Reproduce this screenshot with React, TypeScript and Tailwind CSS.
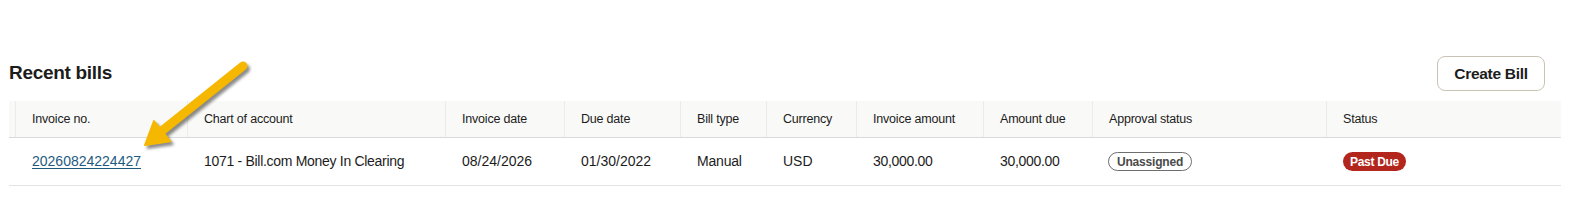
import React from "react";

const headers = [
  "",
  "Invoice no.",
  "Chart of account",
  "Invoice date",
  "Due date",
  "Bill type",
  "Currency",
  "Invoice amount",
  "Amount due",
  "Approval status",
  "Status",
];

const gridCols =
  "grid grid-cols-[7px_172px_258px_119px_116px_86px_90px_127px_109px_234px_234px]";

function Arrow() {
  return (
    <svg
      className="absolute left-0 top-0 pointer-events-none"
      width="300"
      height="180"
      viewBox="0 0 300 180"
    >
      <defs>
        <filter id="blur" x="-20%" y="-20%" width="140%" height="140%">
          <feGaussianBlur stdDeviation="1.6" />
        </filter>
      </defs>
      <g transform="translate(2.5 3)" filter="url(#blur)" opacity="0.45">
        <line x1="243" y1="66" x2="158" y2="134" stroke="#000" strokeWidth="9" strokeLinecap="round" />
        <polygon points="145,145 170.3,141.3 154,121.1" fill="#000" stroke="#000" strokeWidth="2" strokeLinejoin="round" />
      </g>
      <line x1="243" y1="66" x2="158" y2="134" stroke="#f5b700" strokeWidth="9" strokeLinecap="round" />
      <polygon points="145,145 170.3,141.3 154,121.1" fill="#f5b700" stroke="#f5b700" strokeWidth="2" strokeLinejoin="round" />
    </svg>
  );
}

export default function App() {
  return (
    <div className="relative w-[1575px] h-[224px] bg-white text-[#1c1c1c] font-['Liberation_Sans',Arial,sans-serif]">
      <div className="pt-[56px] pl-[9px] pr-[14px]">
        <div className="flex items-center justify-between pr-[16px]">
          <h2 className="text-[19px] font-bold tracking-[-0.3px] text-[#1c1c1c]">Recent bills</h2>
          <button className="h-[35px] w-[108px] rounded-[8px] border border-[#c9c3b6] bg-white text-[15.5px] font-bold text-[#1c1c1c] tracking-[-0.3px]">
            Create Bill
          </button>
        </div>
        <div className="mt-[10px] w-[1552px]">
          <div className={`${gridCols} h-[37px] bg-[#f9f9f7] border-b border-[#dadada]`}>
            {headers.map((h, i) => (
              <div
                key={i}
                className={`flex items-center text-[12.5px] tracking-[-0.2px] text-[#1c1c1c] ${
                  i < headers.length - 1 ? "border-r border-[#ebebe9]" : ""
                } ${i === 0 ? "" : "pl-[16px]"}`}
              >
                {h}
              </div>
            ))}
          </div>
          <div className={`${gridCols} h-[48px] border-b border-[#e3e3e3] text-[14px]`}>
            <div />
            <div className="flex items-center pl-[16px]">
              <a href="#" className="text-[#1e5a80] underline underline-offset-[2px]">
                20260824224427
              </a>
            </div>
            <div className="flex items-center pl-[16px] tracking-[-0.3px]">
              1071 - Bill.com Money In Clearing
            </div>
            <div className="flex items-center pl-[16px]">08/24/2026</div>
            <div className="flex items-center pl-[16px]">01/30/2022</div>
            <div className="flex items-center pl-[16px] tracking-[-0.2px]">Manual</div>
            <div className="flex items-center pl-[16px]">USD</div>
            <div className="flex items-center pl-[16px] tracking-[-0.3px]">30,000.00</div>
            <div className="flex items-center pl-[16px] tracking-[-0.3px]">30,000.00</div>
            <div className="flex items-center pl-[15px]">
              <span className="inline-flex h-[19px] items-center rounded-full border border-[#6e6e6e] px-[8px] text-[12px] font-bold text-[#4a4a4a] tracking-[-0.2px]">
                Unassigned
              </span>
            </div>
            <div className="flex items-center pl-[16px]">
              <span className="inline-flex h-[19px] items-center rounded-full bg-[#b3261e] px-[7px] text-[12px] font-bold text-white tracking-[-0.3px]">
                Past Due
              </span>
            </div>
          </div>
        </div>
      </div>
      <Arrow />
    </div>
  );
}
